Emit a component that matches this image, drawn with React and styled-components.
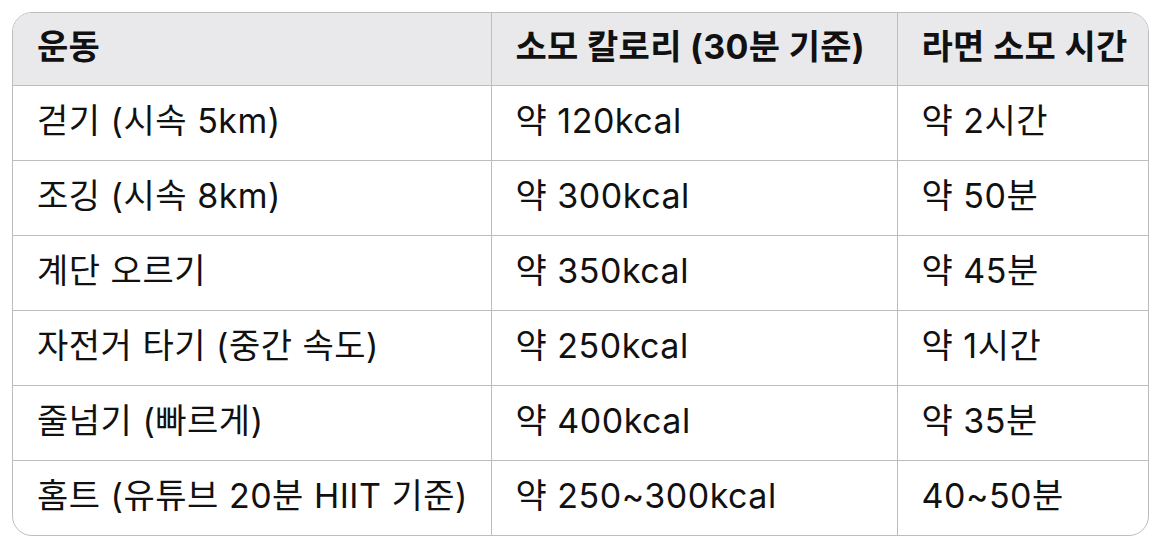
import React from 'react';
import styled, { createGlobalStyle } from 'styled-components';

const Global = createGlobalStyle`
  body {
    margin: 0;
    background: #ffffff;
    font-family: Inter, "Noto Sans CJK KR", "Noto Sans", sans-serif;
    color: #111111;
  }
`;

const Page = styled.div`
  padding: 12px 21px 17px 12px;
`;

const Frame = styled.div`
  border: 1px solid #bdbdbd;
  border-radius: 20px;
  overflow: hidden;
`;

const Table = styled.table`
  width: 100%;
  border-collapse: collapse;
  table-layout: fixed;
`;

const Head = styled.th`
  background: #e9e9eb;
  text-align: left;
  font-weight: 700;
  font-size: 34px;
  line-height: 40px;
  letter-spacing: 0.3px;
  height: 68px;
  padding: 0 0 4px 24px;
  border-bottom: 1px solid #bdbdbd;
  border-left: ${p => (p.$first ? 'none' : '1px solid #bdbdbd')};
  white-space: nowrap;
`;

const Cell = styled.td`
  font-size: 34px;
  font-weight: 400;
  line-height: 40px;
  letter-spacing: 0.5px;
  height: 70px;
  padding: 0 0 4px 24px;
  border-top: ${p => (p.$top ? 'none' : '1px solid #bdbdbd')};
  border-left: ${p => (p.$first ? 'none' : '1px solid #bdbdbd')};
  white-space: nowrap;
`;

const rows = [
  ['걷기 (시속 5km)', '약 120kcal', '약 2시간'],
  ['조깅 (시속 8km)', '약 300kcal', '약 50분'],
  ['계단 오르기', '약 350kcal', '약 45분'],
  ['자전거 타기 (중간 속도)', '약 250kcal', '약 1시간'],
  ['줄넘기 (빠르게)', '약 400kcal', '약 35분'],
  ['홈트 (유튜브 20분 HIIT 기준)', '약 250~300kcal', '40~50분'],
];

export default function App() {
  return (
    <Page>
      <Global />
      <Frame>
        <Table>
          <colgroup>
            <col style={{ width: 478 }} />
            <col style={{ width: 406 }} />
            <col />
          </colgroup>
          <thead>
            <tr>
              <Head $first>운동</Head>
              <Head>소모 칼로리 (30분 기준)</Head>
              <Head>라면 소모 시간</Head>
            </tr>
          </thead>
          <tbody>
            {rows.map((r, i) => (
              <tr key={i}>
                {r.map((c, j) => (
                  <Cell key={j} $first={j === 0} $top={i === 0}>{c}</Cell>
                ))}
              </tr>
            ))}
          </tbody>
        </Table>
      </Frame>
    </Page>
  );
}
